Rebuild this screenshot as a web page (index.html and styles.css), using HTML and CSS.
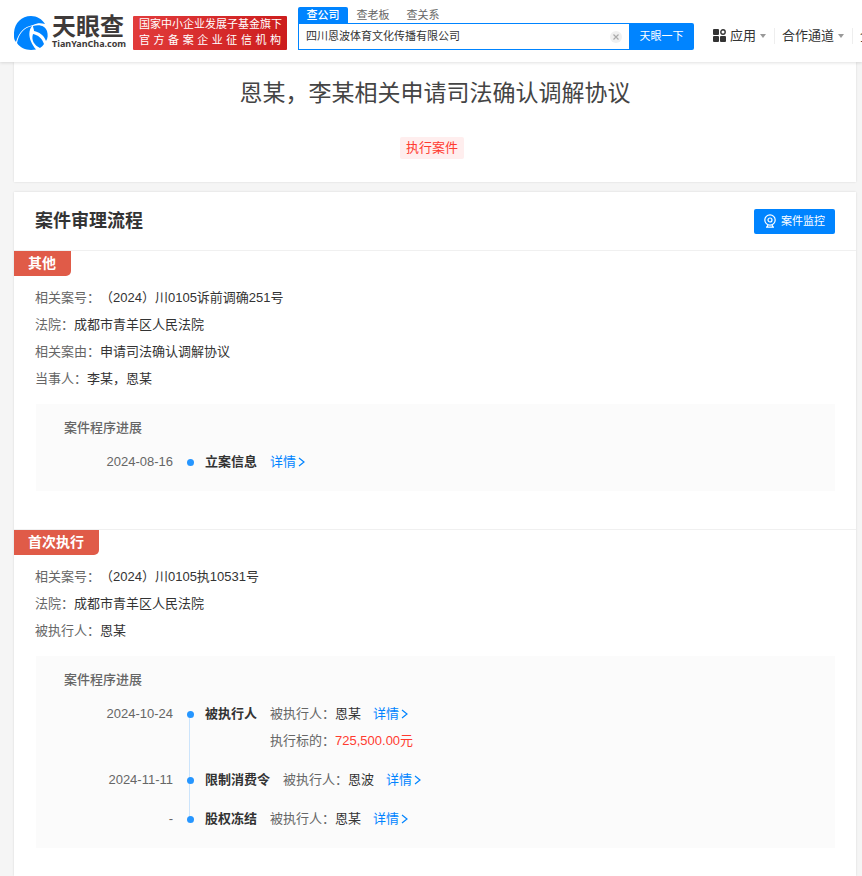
FILE: index.html
```html
<!DOCTYPE html>
<html lang="zh-CN">
<head>
<meta charset="utf-8">
<title>天眼查</title>
<link rel="stylesheet" href="styles.css">
</head>
<body>
<header class="topbar">
  <a class="logo" href="#">
    <svg class="logo-mark" viewBox="0 0 34 34" aria-hidden="true">
      <path fill="#0084ff" d="M0 21C-1 9 6 0 17 0c6 0 11 3 14 8-4-1-8-1-12 1C10 11 5 16 2 26 1 25 0 23 0 21z"/>
      <path fill="#0084ff" d="M3 27C5 18 9 12 18 10c-4 5-4 14 4 23.500C14 35 7 33 3 27z"/>
      <path fill="#0084ff" d="M19 10c7-2 12 0 14 5 1 4 1 7-1 10-2-6-7-9-12-10 0-2-1-3-1-5z"/>
      <path fill="#0084ff" d="M19 18c5 1 9 4 11 10-1 2-3 3-4 4-6-3-9-8-7-14z"/>
    </svg>
    <span class="logo-words">
      <span class="logo-name">天眼查</span>
      <span class="logo-domain">TianYanCha.com</span>
    </span>
  </a>
  <div class="slogan">
    <span>国家中小企业发展子基金旗下</span>
    <span>官方备案企业征信机构</span>
  </div>
  <form class="search">
    <div class="tabs">
      <button type="button" class="tab active">查公司</button>
      <button type="button" class="tab">查老板</button>
      <button type="button" class="tab">查关系</button>
    </div>
    <div class="search-row">
      <div class="field">
        <input type="text" aria-label="搜索公司" value="四川恩波体育文化传播有限公司">
        <button type="button" class="clear" aria-label="清除">
          <svg viewBox="0 0 12 12"><circle cx="6" cy="6" r="6" fill="#f0f0f0"/><path d="M3.500 3.500l5 5m0-5l-5 5" stroke="#aaa" stroke-width="1.200"/></svg>
        </button>
      </div>
      <button type="submit" class="go">天眼一下</button>
    </div>
  </form>
  <nav class="nav">
    <a href="#">
      <svg class="apps" viewBox="0 0 13 13"><g fill="#333"><rect width="6" height="6" rx="1"/><rect y="7" width="6" height="6" rx="1"/><rect x="7" y="7" width="6" height="6" rx="1"/></g><circle cx="10" cy="3" r="2.200" fill="none" stroke="#333" stroke-width="1.400"/></svg>
      应用<i class="caret"></i></a>
    <a href="#">合作通道<i class="caret"></i></a>
    <a href="#">企业级产品<i class="caret"></i></a>
  </nav>
</header>

<main>
  <section class="card summary">
    <h1>恩某，李某相关申请司法确认调解协议</h1>
    <div class="tags"><span class="tag">执行案件</span></div>
  </section>

  <section class="card process">
    <div class="card-head">
      <h2>案件审理流程</h2>
      <button type="button" class="monitor">
        <svg viewBox="0 0 12 14" fill="none" stroke="#fff" stroke-width="1.200"><circle cx="6" cy="6" r="5.200"/><circle cx="6" cy="6" r="2"/><path d="M4 11l-1 2m5-2l1 2M2 13.200h8"/></svg>
        案件监控
      </button>
    </div>

    <article class="stage">
      <h3>其他</h3>
      <dl class="facts">
        <div><dt>相关案号：</dt><dd>（2024）川0105诉前调确251号</dd></div>
        <div><dt>法院：</dt><dd>成都市青羊区人民法院</dd></div>
        <div><dt>相关案由：</dt><dd>申请司法确认调解协议</dd></div>
        <div><dt>当事人：</dt><dd>李某，恩某</dd></div>
      </dl>
      <div class="progress">
        <h4>案件程序进展</h4>
        <ol>
          <li>
            <time>2024-08-16</time><i class="dot"></i><strong>立案信息</strong>
            <a class="more" href="#">详情<svg viewBox="0 0 7 10"><path d="M1 1l5 4-5 4"/></svg></a>
          </li>
        </ol>
      </div>
    </article>

    <article class="stage">
      <h3>首次执行</h3>
      <dl class="facts">
        <div><dt>相关案号：</dt><dd>（2024）川0105执10531号</dd></div>
        <div><dt>法院：</dt><dd>成都市青羊区人民法院</dd></div>
        <div><dt>被执行人：</dt><dd>恩某</dd></div>
      </dl>
      <div class="progress">
        <h4>案件程序进展</h4>
        <ol>
          <li>
            <time>2024-10-24</time><i class="dot"></i><strong>被执行人</strong>
            <div class="detail">
              <p><span class="label">被执行人：</span>恩某<a class="more" href="#">详情<svg viewBox="0 0 7 10"><path d="M1 1l5 4-5 4"/></svg></a></p>
              <p><span class="label">执行标的：</span><span class="amount">725,500.00元</span></p>
            </div>
          </li>
          <li>
            <time>2024-11-11</time><i class="dot"></i><strong>限制消费令</strong>
            <div class="detail">
              <p><span class="label">被执行人：</span>恩波<a class="more" href="#">详情<svg viewBox="0 0 7 10"><path d="M1 1l5 4-5 4"/></svg></a></p>
            </div>
          </li>
          <li>
            <time>-</time><i class="dot"></i><strong>股权冻结</strong>
            <div class="detail">
              <p><span class="label">被执行人：</span>恩某<a class="more" href="#">详情<svg viewBox="0 0 7 10"><path d="M1 1l5 4-5 4"/></svg></a></p>
            </div>
          </li>
        </ol>
      </div>
    </article>
  </section>
</main>
</body>
</html>
```
FILE: styles.css
```css
* { box-sizing: border-box; }

body, h1, h2, h3, h4, dl, dd, ol, p { margin: 0; padding: 0; }

body {
  background: #f5f5f5;
  color: #333;
  font: 13px/27px "Liberation Sans", "Noto Sans CJK SC", sans-serif;
}

a { color: inherit; text-decoration: none; }
button, input { font: inherit; border: 0; padding: 0; }
button { cursor: pointer; }
svg { display: block; flex: none; }

.topbar {
  position: relative;
  display: flex;
  height: 62px;
  padding-left: 14px;
  background: #fff;
  box-shadow: 0 1px 3px rgba(0, 0, 0, .12);
  white-space: nowrap;
}

.logo { display: flex; gap: 4px; padding-top: 16px; width: 119px; flex: none; }
.logo-mark { width: 34px; height: 34px; }
.logo-words { display: flex; flex-direction: column; color: #3e3a39; font-weight: 700; }
.logo-name { font-size: 24px; line-height: 22px; }
.logo-domain { font: 700 9px/12px "Noto Sans", sans-serif; }

.slogan {
  flex: none;
  width: 154px;
  height: 34px;
  margin-top: 16px;
  padding: 0 6px;
  border-radius: 1px;
  background: linear-gradient(100deg, #e23c3c, #cc1c1c);
  color: #fff;
  font-size: 11px;
  line-height: 16px;
}
.slogan span { display: block; text-align: justify; text-align-last: justify; }

.search { flex: none; width: 396px; margin-left: 11px; padding-top: 7px; font-size: 11px; }
.tabs { display: flex; height: 16px; }
.tab { width: 50px; background: none; color: #666; line-height: 16px; }
.tab.active { background: #0084ff; color: #fff; font-weight: 500; border-radius: 2px 2px 0 0; }
.search-row { display: flex; height: 27px; }
.field {
  display: flex;
  flex: 1;
  align-items: center;
  padding: 0 7px;
  border: 1px solid #0084ff;
  border-right: 0;
}
.field input { flex: 1; min-width: 0; color: #333; outline: 0; background: none; }
.clear { background: none; }
.clear svg { width: 12px; height: 12px; }
.go { width: 65px; background: #0084ff; color: #fff; border-radius: 0 2px 2px 0; }

.nav { display: flex; align-items: center; flex: 1; min-width: 0; padding: 9px 0 0 19px; overflow: hidden; }
.nav a { display: flex; align-items: center; flex: none; line-height: 20px; }
.nav a + a { margin-left: 8px; padding-left: 7px; border-left: 1px solid #eee; line-height: 16px; }
.apps { width: 13px; height: 13px; margin-right: 4px; }
.caret { margin-left: 4px; border: 3px solid transparent; border-top: 4px solid #999; border-bottom: 0; }

main { padding: 0 6px 0 14px; }
.card { background: #fff; box-shadow: 0 0 2px rgba(0, 0, 0, .12); }

.summary { height: 120px; padding-top: 13px; text-align: center; }
.summary h1 { color: #444; font-size: 23px; font-weight: 400; line-height: 36px; }
.tags { display: flex; justify-content: center; margin-top: 26px; }
.tag {
  margin-right: 6px;
  padding: 0 6px;
  border-radius: 2px;
  background: #ffeeee;
  color: #ff3b30;
  line-height: 22px;
}

.process { margin-top: 10px; }
.card-head { display: flex; justify-content: space-between; align-items: center; height: 58px; padding: 0 21px; }
.card-head h2 { font-size: 18px; font-weight: 700; }
.monitor {
  display: flex;
  align-items: center;
  gap: 5px;
  height: 25px;
  padding: 0 10px;
  border-radius: 2px;
  background: #0084ff;
  color: #fff;
  font-size: 11px;
}
.monitor svg { width: 12px; height: 14px; }

.stage { padding-bottom: 38px; border-top: 1px solid #f0f0f0; }
.stage:last-child { padding-bottom: 28px; }
.stage h3 {
  width: fit-content;
  padding: 0 15px 0 14px;
  border-radius: 0 0 5px 0;
  background: #e05b48;
  color: #fff;
  font-size: 14px;
  line-height: 25px;
}
.facts { padding: 8px 21px 12px; }
.facts div { display: flex; }
.facts dt, .label { color: #666; }

.progress { margin: 0 21px 0 22px; padding: 10px 28px 16px; background: #fbfbfb; }
.progress h4 { margin-bottom: 7px; color: #666; font-weight: 500; }
.progress ol { display: grid; gap: 12px; list-style: none; }
.progress li { position: relative; display: flex; }
.progress li + li::before {
  content: "";
  position: absolute;
  left: 125px;
  top: -12px;
  width: 1px;
  height: 26px;
  background: #cce4fb;
}
.progress li:not(:last-child)::after {
  content: "";
  position: absolute;
  left: 125px;
  top: 14px;
  bottom: 0;
  width: 1px;
  background: #cce4fb;
}
.progress time { width: 109px; color: #666; text-align: right; }
.dot {
  position: relative;
  z-index: 1;
  width: 7px;
  height: 7px;
  margin: 11px 11px 0 14px;
  border-radius: 50%;
  background: #2696ff;
}
.progress strong { margin-right: 13px; font-weight: 700; }
.detail p { display: flex; }
.more { display: inline-flex; align-items: center; gap: 2px; color: #0084ff; }
.detail .more { margin-left: 12px; }
.more svg { width: 7px; height: 10px; fill: none; stroke: #0084ff; stroke-width: 1.2; }
.amount { color: #ff3b30; }
```
